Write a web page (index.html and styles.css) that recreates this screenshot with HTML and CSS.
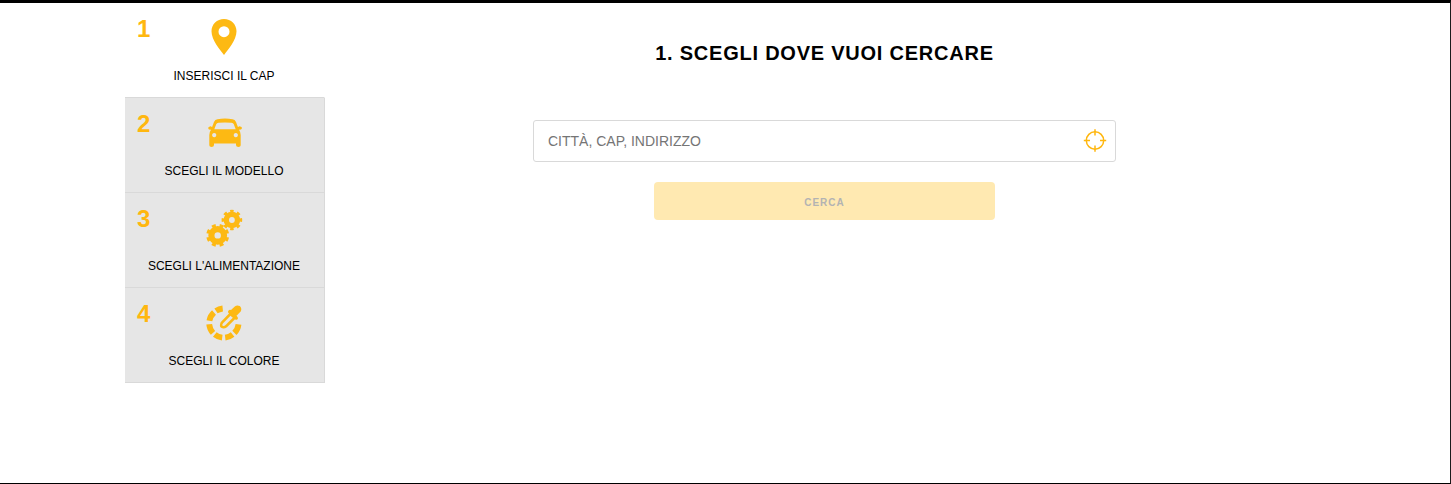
FILE: index.html
```html
<!DOCTYPE html>
<html lang="it">
<head>
<meta charset="utf-8">
<title>Scegli dove vuoi cercare</title>
<link rel="stylesheet" href="styles.css">
</head>
<body>
<div class="page">
  <nav class="steps">
    <div class="step active">
      <span class="number">1</span>
      <svg class="icon" viewBox="0 0 40 40"><path fill-rule="evenodd" d="M20 2C12.900 2 7.500 7.300 7.500 14.200C7.500 23 16 32.500 20 38C24 32.500 32.500 23 32.500 14.200C32.500 7.300 27.100 2 20 2ZM20 9.200a5.500 5.500 0 1 1 0 11a5.500 5.500 0 1 1 0-11Z"/></svg>
      <span class="label">INSERISCI IL CAP</span>
    </div>
    <div class="step">
      <span class="number">2</span>
      <svg class="icon" viewBox="0 -1 40 40"><path fill-rule="evenodd" d="M13.500 6.200Q21 4.800 28.500 6.200Q31 6.500 32 9L34 14.200Q34.800 13.200 36.200 13.400Q38 13.700 38 15.200Q37.500 16.700 35 16.700Q36.700 19 36.700 22V32.300Q36.700 34 34.500 34Q32 34 32 32V30.500H10V32Q10 34 7.500 34Q5.300 34 5.300 32.300V22Q5.300 19 7 16.700Q4.300 16.700 4.200 15.200Q4.200 13.700 6 13.400Q7.300 13.200 8 14.200L10 9Q11 6.500 13.500 6.200ZM14.500 9.700Q12.800 9.800 12.200 11.200L10.300 16.300H31.700L29.800 11.200Q29.200 9.800 27.500 9.700Q21 9.200 14.500 9.700ZM10.200 20a2.100 2.100 0 1 0 .01 0ZM31.800 20a2.100 2.100 0 1 0 .01 0Z"/></svg>
      <span class="label">SCEGLI IL MODELLO</span>
    </div>
    <div class="step">
      <span class="number">3</span>
      <svg class="icon" viewBox="0 -1 40 40">
        <g class="gear"><circle cx="27.900" cy="12" r="5.600" stroke-width="5.400"/><circle cx="27.900" cy="12" r="8.600" stroke-width="3.400" pathLength="80" stroke-dasharray="5 5" stroke-dashoffset="2.500"/></g>
        <g class="gear"><circle cx="13.700" cy="27.400" r="6.300" stroke-width="6.200"/><circle cx="13.700" cy="27.400" r="9.900" stroke-width="3.200" pathLength="80" stroke-dasharray="5 5" stroke-dashoffset="7.500"/></g>
      </svg>
      <span class="label">SCEGLI L'ALIMENTAZIONE</span>
    </div>
    <div class="step">
      <span class="number">4</span>
      <svg class="icon" viewBox="0 -1 40 40">
        <path class="ring" d="M18.700 5.500A14.700 14.700 0 0 0 12 7.900M10 9.500A14.700 14.700 0 0 0 5.400 17.700M5.200 21.300A14.700 14.700 0 0 0 9 29.900M10.800 31.500A14.700 14.700 0 0 0 18.200 34.600M21.200 34.600A14.700 14.700 0 0 0 28.600 31.500M30.400 29.900A14.700 14.700 0 0 0 34.500 21.300"/>
        <path fill-rule="evenodd" d="M27 7L30.800 3.400Q33 1.600 35.800 3Q38.300 5.500 36.700 8.500L32.500 12.800L33.600 14Q34.500 15.500 33.300 16.500Q32 17.200 31 16.300L23 24.200Q20.800 25.800 18.300 25.300Q15.300 24.500 16 21.500Q16.100 19.800 17.300 18.600L25 10.500Q23.400 9.200 24.200 7.900Q25.400 6.300 27 7ZM26.500 12.700L19.100 20.200Q18.200 21.300 18.300 22.300Q18.700 23 19.500 22.900Q20.500 22.900 21.500 22L28.800 14.700Z"/>
      </svg>
      <span class="label">SCEGLI IL COLORE</span>
    </div>
  </nav>
  <main class="search">
    <h1 class="title">1. SCEGLI DOVE VUOI CERCARE</h1>
    <div class="field">
      <input class="input" type="text" placeholder="CITTÀ, CAP, INDIRIZZO">
      <svg class="locate" viewBox="0 0 24 24"><circle cx="12" cy="11.500" r="8.700"/><path d="M12 .3V6.500M12 16.500V22.700M.8 11.500H7M17 11.500H23.200"/></svg>
    </div>
    <button class="submit" disabled>CERCA</button>
  </main>
</div>
</body>
</html>
```
FILE: styles.css
```css
* { box-sizing: border-box; }
body { margin: 0; font-family: "Liberation Sans", Arial, sans-serif; color: #000; }
.page {
  display: flex;
  height: 484px;
  padding-left: 125px;
  background: #fff;
  border-top: 3px solid #000;
  border-right: 1px solid #1c1c1c;
  border-bottom: 1px solid #000;
}
.steps { width: 200px; }
.step {
  position: relative;
  height: 95px;
  display: flex;
  flex-direction: column;
  align-items: center;
  background: #e6e6e6;
  border-right: 1px solid #d9d9d9;
  border-bottom: 1px solid #d9d9d9;
}
.step.active { background: #fff; border-right-color: #fff; }
.number {
  position: absolute;
  left: 12px;
  top: 12px;
  font-size: 24px;
  line-height: 28px;
  font-weight: bold;
  color: #ffb70f;
}
.icon { width: 40px; height: 40px; margin: 14px 2px 0 0; fill: #fdb913; }
.gear, .ring { fill: none; stroke: #fdb913; }
.ring { stroke-width: 5.800px; }
.label { margin: 11px 1px 0 0; font-size: 12px; line-height: 16px; white-space: nowrap; }
.search {
  width: 583px;
  margin-left: 208px;
  display: flex;
  flex-direction: column;
  align-items: center;
}
.title { margin: 38px 0 0; font-size: 20px; line-height: 24px; letter-spacing: 0.770px; white-space: nowrap; }
.field {
  display: flex;
  align-items: center;
  width: 583px;
  height: 42px;
  margin-top: 55px;
  padding: 0 8px 0 14px;
  border: 1px solid #d9d9d9;
  border-radius: 3px;
}
.input { flex: 1; padding: 0; border: 0; outline: 0; background: none; font: 14px "Liberation Sans", Arial, sans-serif; }
.input::placeholder { color: #757575; }
.locate { width: 24px; height: 24px; fill: none; stroke: #ffb70f; stroke-width: 1.500px; }
.submit {
  width: 341px;
  height: 38px;
  margin-top: 20px;
  padding: 3px 0 0;
  border: 0;
  border-radius: 4px;
  background: #ffe9b1;
  color: #b3b3b3;
  font: bold 10px "Liberation Sans", Arial, sans-serif;
  letter-spacing: 1px;
}
```
